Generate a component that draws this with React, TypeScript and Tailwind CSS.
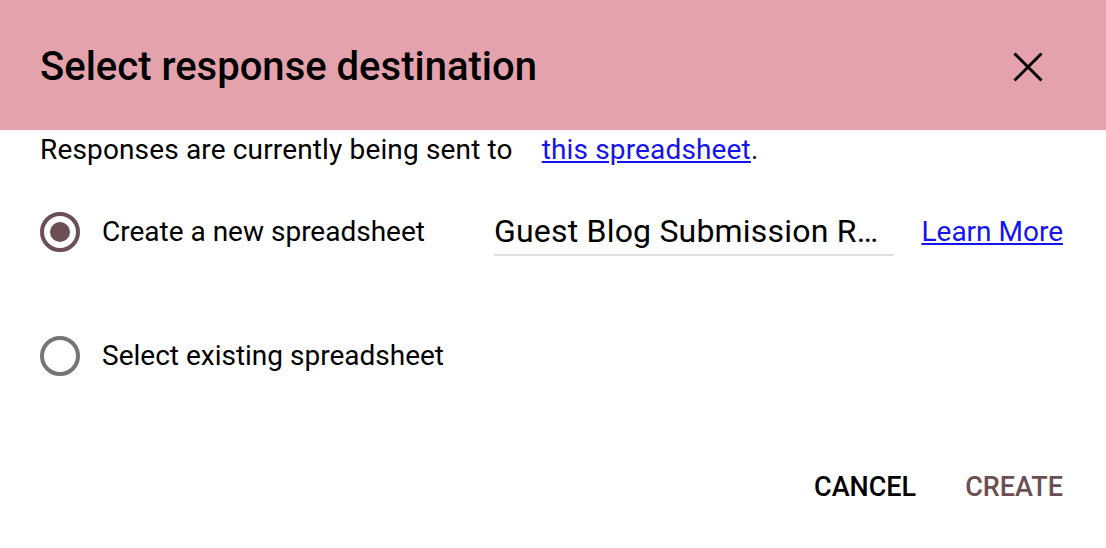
import React, { useState } from "react";

function Radio({ checked }: { checked: boolean }) {
  return (
    <span
      className={
        "flex h-[40px] w-[40px] shrink-0 items-center justify-center rounded-full border-[4px] " +
        (checked ? "border-[#6b4f54]" : "border-[#757575]")
      }
    >
      {checked && <span className="h-[20px] w-[20px] rounded-full bg-[#6b4f54]" />}
    </span>
  );
}

export default function App() {
  const [choice, setChoice] = useState<"new" | "existing">("new");

  return (
    <div
      className="flex h-[548px] w-[1106px] flex-col bg-white text-black"
      style={{ fontFamily: "Roboto, 'Liberation Sans', sans-serif" }}
    >
      <div className="flex h-[130px] shrink-0 items-center justify-between bg-[#e4a3ac] pl-[40px] pr-[62px] pt-[4px]">
        <h1 className="text-[40px] font-medium">Select response destination</h1>
        <button type="button" className="flex h-[32px] w-[32px] items-center justify-center">
          <svg width="30" height="30" viewBox="0 0 30 30" fill="none" stroke="#000" strokeWidth="3" strokeLinecap="square">
            <path d="M2.5 2.5L27.5 27.5M27.5 2.5L2.5 27.5" />
          </svg>
        </button>
      </div>

      <div className="flex flex-1 flex-col px-[40px]">
        <p className="mt-[2px] h-[36px] text-[28px] leading-[36px] tracking-[0.15px]">
          Responses are currently being sent to
          <a href="#" className="ml-[29px] text-[#1414ee] underline">this spreadsheet</a>.
        </p>

        <div className="mt-[40px] flex h-[48px] items-center">
          <label className="flex w-[454px] cursor-pointer items-center" onClick={() => setChoice("new")}>
            <Radio checked={choice === "new"} />
            <span className="ml-[22px] text-[28px]">Create a new spreadsheet</span>
          </label>
          <div className="flex h-[48px] w-[400px] items-center border-b-2 border-[#e0e0e0]">
            <span className="truncate text-[32px] leading-[40px] tracking-[0.2px]">Guest Blog Submission R…</span>
          </div>
          <a href="#" className="ml-auto mr-[3px] text-[28px] text-[#1414ee] underline">Learn More</a>
        </div>

        <label className="mt-[76px] flex h-[48px] cursor-pointer items-center" onClick={() => setChoice("existing")}>
          <Radio checked={choice === "existing"} />
          <span className="ml-[22px] text-[28px]">Select existing spreadsheet</span>
        </label>

        <div className="mt-[89px] flex h-[36px] items-center justify-end gap-[49px] pr-[3px]">
          <button type="button" className="text-[27px] font-medium leading-[36px]">CANCEL</button>
          <button type="button" className="text-[27px] font-medium leading-[36px] text-[#6b4f54]">CREATE</button>
        </div>
      </div>
    </div>
  );
}
